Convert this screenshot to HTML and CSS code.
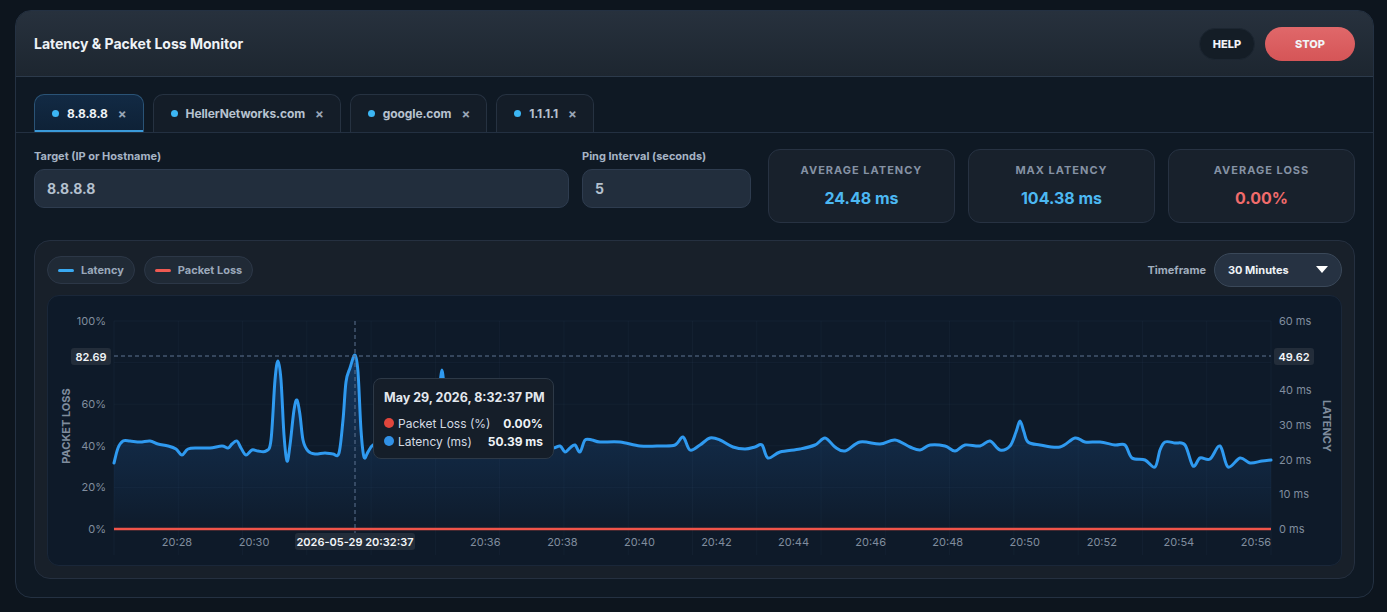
FILE: index.html
```html
<!DOCTYPE html>
<html>
<head>
  <title>Latency &amp; Packet Loss Monitor</title>
  <link rel="stylesheet" href="styles.css">
</head>
<body>
  <div class="app">
    <header class="app-header">
      <h1>Latency &amp; Packet Loss Monitor</h1>
      <div class="header-actions">
        <button class="btn btn-help">HELP</button>
        <button class="btn btn-stop">STOP</button>
      </div>
    </header>

    <nav class="tabs">
      <div class="tab active"><span class="dot"></span>8.8.8.8<span class="close">&times;</span></div>
      <div class="tab"><span class="dot"></span>HellerNetworks.com<span class="close">&times;</span></div>
      <div class="tab"><span class="dot"></span>google.com<span class="close">&times;</span></div>
      <div class="tab"><span class="dot"></span>1.1.1.1<span class="close">&times;</span></div>
    </nav>

    <section class="controls">
      <div class="fields">
        <div class="field field-target">
          <label for="target">Target (IP or Hostname)</label>
          <input type="text" id="target" value="8.8.8.8">
        </div>
        <div class="field field-interval">
          <label for="interval">Ping Interval (seconds)</label>
          <input type="text" id="interval" value="5">
        </div>
      </div>
      <div class="stats">
        <div class="stat">
          <div class="stat-label">AVERAGE LATENCY</div>
          <div class="stat-value">24.48 ms</div>
        </div>
        <div class="stat">
          <div class="stat-label">MAX LATENCY</div>
          <div class="stat-value">104.38 ms</div>
        </div>
        <div class="stat">
          <div class="stat-label">AVERAGE LOSS</div>
          <div class="stat-value loss">0.00%</div>
        </div>
      </div>
    </section>

    <section class="chart-panel">
      <div class="chart-toolbar">
        <div class="legend">
          <span class="legend-item"><span class="swatch latency"></span>Latency</span>
          <span class="legend-item"><span class="swatch loss"></span>Packet Loss</span>
        </div>
        <div class="timeframe">
          <span class="timeframe-label">Timeframe</span>
          <div class="select">
            <span>30 Minutes</span>
            <svg width="12" height="8" viewBox="0 0 12 8"><path d="M0 0 L12 0 L6 7 Z" fill="#ffffff"/></svg>
          </div>
        </div>
      </div>

      <div class="chart">
        <svg id="chart-svg" width="1295" height="271" viewBox="47 295 1295 271">
          <defs>
            <linearGradient id="area-fill" x1="0" y1="0" x2="0" y2="1">
              <stop offset="0" stop-color="#1f5fa8" stop-opacity="0.42"/>
              <stop offset="1" stop-color="#1f5fa8" stop-opacity="0.02"/>
            </linearGradient>
          </defs>
          <g id="grid"></g>
          <g id="axes" class="axis-text"></g>
          <path id="latency-area" fill="url(#area-fill)"/>
          <line x1="114" y1="529" x2="1271" y2="529" stroke="#f0544a" stroke-width="2.5"/>
          <path id="latency-line" fill="none" stroke="#2f9af0" stroke-width="3" stroke-linejoin="round" stroke-linecap="round"/>
          <line x1="355" y1="321" x2="355" y2="534" class="crosshair"/>
          <line x1="114" y1="356" x2="1271" y2="356" class="crosshair"/>
          <rect x="71" y="348" width="40" height="17" rx="3" fill="#232d3a"/>
          <text x="91" y="360.5" text-anchor="middle" class="axis-badge">82.69</text>
          <rect x="1274" y="348" width="40" height="17" rx="3" fill="#232d3a"/>
          <text x="1294" y="360.5" text-anchor="middle" class="axis-badge">49.62</text>
          <text transform="translate(70 426) rotate(-90)" text-anchor="middle" class="axis-title">PACKET LOSS</text>
          <text transform="translate(1323 426) rotate(90)" text-anchor="middle" class="axis-title">LATENCY</text>
          <rect x="295" y="533" width="120" height="17" rx="3" fill="#232d3a"/>
          <text x="355" y="545.5" text-anchor="middle" class="axis-badge">2026-05-29 20:32:37</text>
        </svg>

        <div class="tooltip">
          <div class="tooltip-title">May 29, 2026, 8:32:37 PM</div>
          <div class="tooltip-row">
            <span class="tooltip-dot loss"></span>
            <span class="tooltip-name">Packet Loss (%)</span>
            <span class="tooltip-value">0.00%</span>
          </div>
          <div class="tooltip-row">
            <span class="tooltip-dot latency"></span>
            <span class="tooltip-name">Latency (ms)</span>
            <span class="tooltip-value">50.39 ms</span>
          </div>
        </div>
      </div>
    </section>
  </div>

  <script>
    const NS = 'http://www.w3.org/2000/svg';
    const plot = { left: 114, right: 1271, top: 321, bottom: 529 };

    // latency samples, already in chart pixel space
    const points = [
      [114,463],[118,448],[123,441],[130,441],[140,442],[150,441],[158,444],[168,446],[176,449],
      [182,455],[188,449],[198,448],[210,448],[222,446],[228,448],[232,444],[237,441],[241,448],
      [246,455],[252,450],[258,451],[266,451],[271,440],[275,380],[278,361],[281,380],[284,435],
      [287,461],[290,445],[294,410],[297,400],[300,415],[303,440],[308,451],[315,454],[325,453],
      [333,454],[339,453],[343,420],[346,382],[350,368],[355,355],[358,372],[361,430],[364,457],
      [368,452],[373,445],[385,442],[400,445],[415,447],[430,445],[437,420],[442,370],[446,420],
      [450,442],[470,445],[500,447],[530,446],[552,448],[560,446],[565,452],[570,448],[575,445],
      [580,452],[585,440],[592,440],[600,442],[620,442],[640,446],[660,446],[675,445],[683,437],
      [690,450],[700,445],[710,438],[720,440],[733,447],[745,449],[755,447],[762,445],[768,458],
      [780,452],[800,449],[815,445],[825,438],[835,447],[845,451],[860,442],[880,444],[895,440],
      [910,447],[920,450],[930,445],[945,446],[955,451],[965,445],[980,446],[990,441],[1000,450],
      [1010,446],[1016,432],[1020,421],[1024,432],[1028,442],[1040,445],[1060,447],[1075,438],
      [1085,442],[1100,442],[1115,445],[1125,445],[1132,458],[1145,460],[1155,467],[1160,450],
      [1165,442],[1175,443],[1185,445],[1193,466],[1200,458],[1210,459],[1220,446],[1228,467],
      [1240,458],[1250,463],[1262,461],[1271,460]
    ];

    function smoothPath(pts) {
      let d = `M${pts[0][0]},${pts[0][1]}`;
      for (let i = 0; i < pts.length - 1; i++) {
        const p0 = pts[i - 1] || pts[i];
        const p1 = pts[i];
        const p2 = pts[i + 1];
        const p3 = pts[i + 2] || p2;
        const c1x = p1[0] + (p2[0] - p0[0]) / 6;
        const c1y = p1[1] + (p2[1] - p0[1]) / 6;
        const c2x = p2[0] - (p3[0] - p1[0]) / 6;
        const c2y = p2[1] - (p3[1] - p1[1]) / 6;
        d += ` C${c1x.toFixed(1)},${c1y.toFixed(1)} ${c2x.toFixed(1)},${c2y.toFixed(1)} ${p2[0]},${p2[1]}`;
      }
      return d;
    }

    function el(name, attrs, text) {
      const node = document.createElementNS(NS, name);
      for (const key in attrs) node.setAttribute(key, attrs[key]);
      if (text) node.textContent = text;
      return node;
    }

    const line = smoothPath(points);
    document.getElementById('latency-line').setAttribute('d', line);
    document.getElementById('latency-area').setAttribute('d',
      `${line} L${plot.right},${plot.bottom} L${plot.left},${plot.bottom} Z`);

    const grid = document.getElementById('grid');
    const axes = document.getElementById('axes');
    const rowH = (plot.bottom - plot.top) / 5;
    for (let i = 0; i <= 5; i++) {
      const y = plot.top + i * rowH;
      grid.appendChild(el('line', { x1: plot.left, x2: plot.right, y1: y, y2: y, class: 'grid-line' }));
    }
    const colW = (plot.right - plot.left) / 18;
    for (let i = 0; i <= 18; i++) {
      const x = plot.left + i * colW;
      grid.appendChild(el('line', { x1: x, x2: x, y1: plot.top, y2: plot.bottom + 26, class: 'grid-line' }));
    }

    const lossTicks = ['100%', '', '60%', '40%', '20%', '0%'];
    const latencyTicks = ['60 ms', '50 ms', '40 ms', '30 ms', '20 ms', '10 ms', '0 ms'];
    lossTicks.forEach((label, i) => {
      if (!label) return;
      axes.appendChild(el('text', { x: 106, y: plot.top + i * rowH + 4, 'text-anchor': 'end' }, label));
    });
    const latH = (plot.bottom - plot.top) / 6;
    latencyTicks.forEach((label, i) => {
      if (label === '50 ms') return;
      axes.appendChild(el('text', { x: 1279, y: plot.top + i * latH + 4 }, label));
    });

    // 20:32 and 20:34 sit under the crosshair time badge
    for (let m = 28; m <= 56; m += 2) {
      if (m === 32 || m === 34) continue;
      const x = 177 + (m - 28) / 2 * 77.07;
      axes.appendChild(el('text', { x: x, y: 546, 'text-anchor': 'middle' }, `20:${m}`));
    }
  </script>
</body>
</html>
```

FILE: styles.css
```css
* {
  box-sizing: border-box;
}
body {
  margin: 0;
  background: #0d151e;
  font-family: Inter, "Noto Sans", sans-serif;
  color: #e6ebf1;
}
.app {
  margin: 10px 13px 0 15px;
  height: 588px;
  border: 1px solid #243142;
  border-radius: 16px;
  background: #0f1924;
  overflow: hidden;
}
.app-header {
  height: 66px;
  padding: 0 18px;
  display: flex;
  align-items: center;
  justify-content: space-between;
  background: linear-gradient(180deg, #27313d 0%, #1d2630 100%);
  border-bottom: 1px solid #2c3a4b;
}
.app-header h1 {
  margin: 0;
  font-size: 14px;
  font-weight: 700;
  color: #eef2f6;
}
.header-actions {
  display: flex;
  align-items: center;
  gap: 10px;
}
.btn {
  border: none;
  font-family: inherit;
  font-size: 11px;
  font-weight: 800;
  color: #f1f4f8;
  border-radius: 17px;
}
.btn-help {
  width: 56px;
  height: 32px;
  background: #141d26;
  border: 1px solid #1c2631;
}
.btn-stop {
  width: 90px;
  height: 34px;
  background: linear-gradient(180deg, #e0686a 0%, #d55557 100%);
}

.tabs {
  margin-top: 17px;
  padding: 0 18px;
  display: flex;
  gap: 9px;
  border-bottom: 1px solid #233041;
}
.tab {
  height: 38px;
  padding: 0 16px 0 17px;
  display: flex;
  align-items: center;
  font-size: 12px;
  font-weight: 700;
  letter-spacing: -0.1px;
  color: #b7c2cf;
  background: #141d28;
  border: 1px solid #263241;
  border-bottom: none;
  border-radius: 10px 10px 0 0;
}
.tab.active {
  color: #eef2f6;
  background: linear-gradient(180deg, #122a44 0%, #0e2136 100%);
  border-color: #2a5376;
  box-shadow: inset 0 -2px 0 #3a9ad9;
}
.tab .dot {
  width: 7px;
  height: 7px;
  border-radius: 50%;
  background: #3cb6f4;
  margin-right: 8px;
}
.tab .close {
  margin-left: 10px;
  font-size: 13px;
  color: #98a5b6;
}

.controls {
  margin-top: 16px;
  padding: 0 18px;
  display: flex;
  gap: 17px;
}
.fields {
  flex: 1;
  display: flex;
  gap: 13px;
}
.field {
  display: flex;
  flex-direction: column;
}
.field-target {
  flex: 1;
}
.field-interval {
  width: 169px;
}
.field label {
  height: 14px;
  margin-bottom: 6px;
  font-size: 11px;
  font-weight: 700;
  color: #a6b4c5;
}
.field input {
  height: 39px;
  padding: 0 12px;
  font-family: inherit;
  font-size: 14px;
  font-weight: 700;
  color: #b5c1cf;
  background: #222e3d;
  border: 1px solid #2e3c4f;
  border-radius: 10px;
  outline: none;
}
.stats {
  width: 587px;
  display: flex;
  gap: 13px;
}
.stat {
  flex: 1;
  height: 74px;
  padding-top: 13px;
  text-align: center;
  background: #18212c;
  border: 1px solid #273242;
  border-radius: 12px;
}
.stat-label {
  font-size: 11px;
  font-weight: 700;
  letter-spacing: 1px;
  color: #8592a4;
}
.stat-value {
  margin-top: 11px;
  font-size: 16px;
  font-weight: 700;
  color: #4cb8f2;
}
.stat-value.loss {
  color: #f06b6b;
}

.chart-panel {
  margin: 17px 18px 0;
  height: 339px;
  padding: 12px 12px 0;
  background: #18202a;
  border: 1px solid #253040;
  border-radius: 16px;
}
.chart-toolbar {
  height: 34px;
  display: flex;
  align-items: center;
  justify-content: space-between;
}
.legend {
  display: flex;
  gap: 9px;
}
.legend-item {
  height: 28px;
  padding: 0 10px;
  display: flex;
  align-items: center;
  gap: 7px;
  font-size: 11px;
  font-weight: 700;
  color: #9aa8ba;
  background: #202a36;
  border: 1px solid #2c3747;
  border-radius: 14px;
}
.swatch {
  width: 16px;
  height: 3px;
  border-radius: 2px;
}
.swatch.latency {
  background: #39a9f1;
}
.swatch.loss {
  background: #ef5a52;
}
.timeframe {
  display: flex;
  align-items: center;
  gap: 8px;
}
.timeframe-label {
  font-size: 11px;
  font-weight: 700;
  color: #a0adbd;
}
.select {
  width: 128px;
  height: 34px;
  padding: 0 13px 0 13px;
  display: flex;
  align-items: center;
  justify-content: space-between;
  font-size: 11px;
  font-weight: 700;
  color: #eef2f6;
  background: #263242;
  border: 1px solid #3a4859;
  border-radius: 17px;
}

.chart {
  position: relative;
  margin-top: 8px;
  height: 271px;
  background: #0e1a29;
  border: 1px solid #1a2739;
  border-radius: 12px;
  overflow: hidden;
}
.chart svg {
  position: absolute;
  left: -1px;
  top: -1px;
}
.grid-line {
  stroke: rgba(120, 150, 190, 0.05);
  stroke-width: 1;
}
.axis-text text {
  font-family: Inter, "Noto Sans", sans-serif;
  font-size: 11px;
  fill: #808d9e;
}
.axis-title {
  font-family: Inter, "Noto Sans", sans-serif;
  font-size: 11px;
  font-weight: 700;
  fill: #7f8c9d;
}
.axis-badge {
  font-family: Inter, "Noto Sans", sans-serif;
  font-size: 11px;
  font-weight: 600;
  fill: #f2f5f8;
}
.crosshair {
  stroke: #5c7391;
  stroke-width: 1;
  stroke-dasharray: 4 3;
}

.tooltip {
  position: absolute;
  left: 325px;
  top: 82px;
  width: 181px;
  height: 81px;
  padding: 11px 10px 0 10px;
  background: #151e29;
  border: 1px solid #2d3947;
  border-radius: 8px;
  font-size: 12px;
}
.tooltip-title {
  font-weight: 700;
  font-size: 12.5px;
  white-space: nowrap;
  color: #e3e8ee;
  margin-bottom: 9px;
}
.tooltip-row {
  display: flex;
  align-items: center;
  height: 18px;
  color: #d3dae3;
}
.tooltip-dot {
  width: 10px;
  height: 10px;
  border-radius: 50%;
  margin-right: 4px;
}
.tooltip-dot.loss {
  background: #e0463c;
}
.tooltip-dot.latency {
  background: #3191e6;
}
.tooltip-name {
  flex: 1;
}
.tooltip-value {
  font-weight: 700;
  color: #eef2f6;
}
```
